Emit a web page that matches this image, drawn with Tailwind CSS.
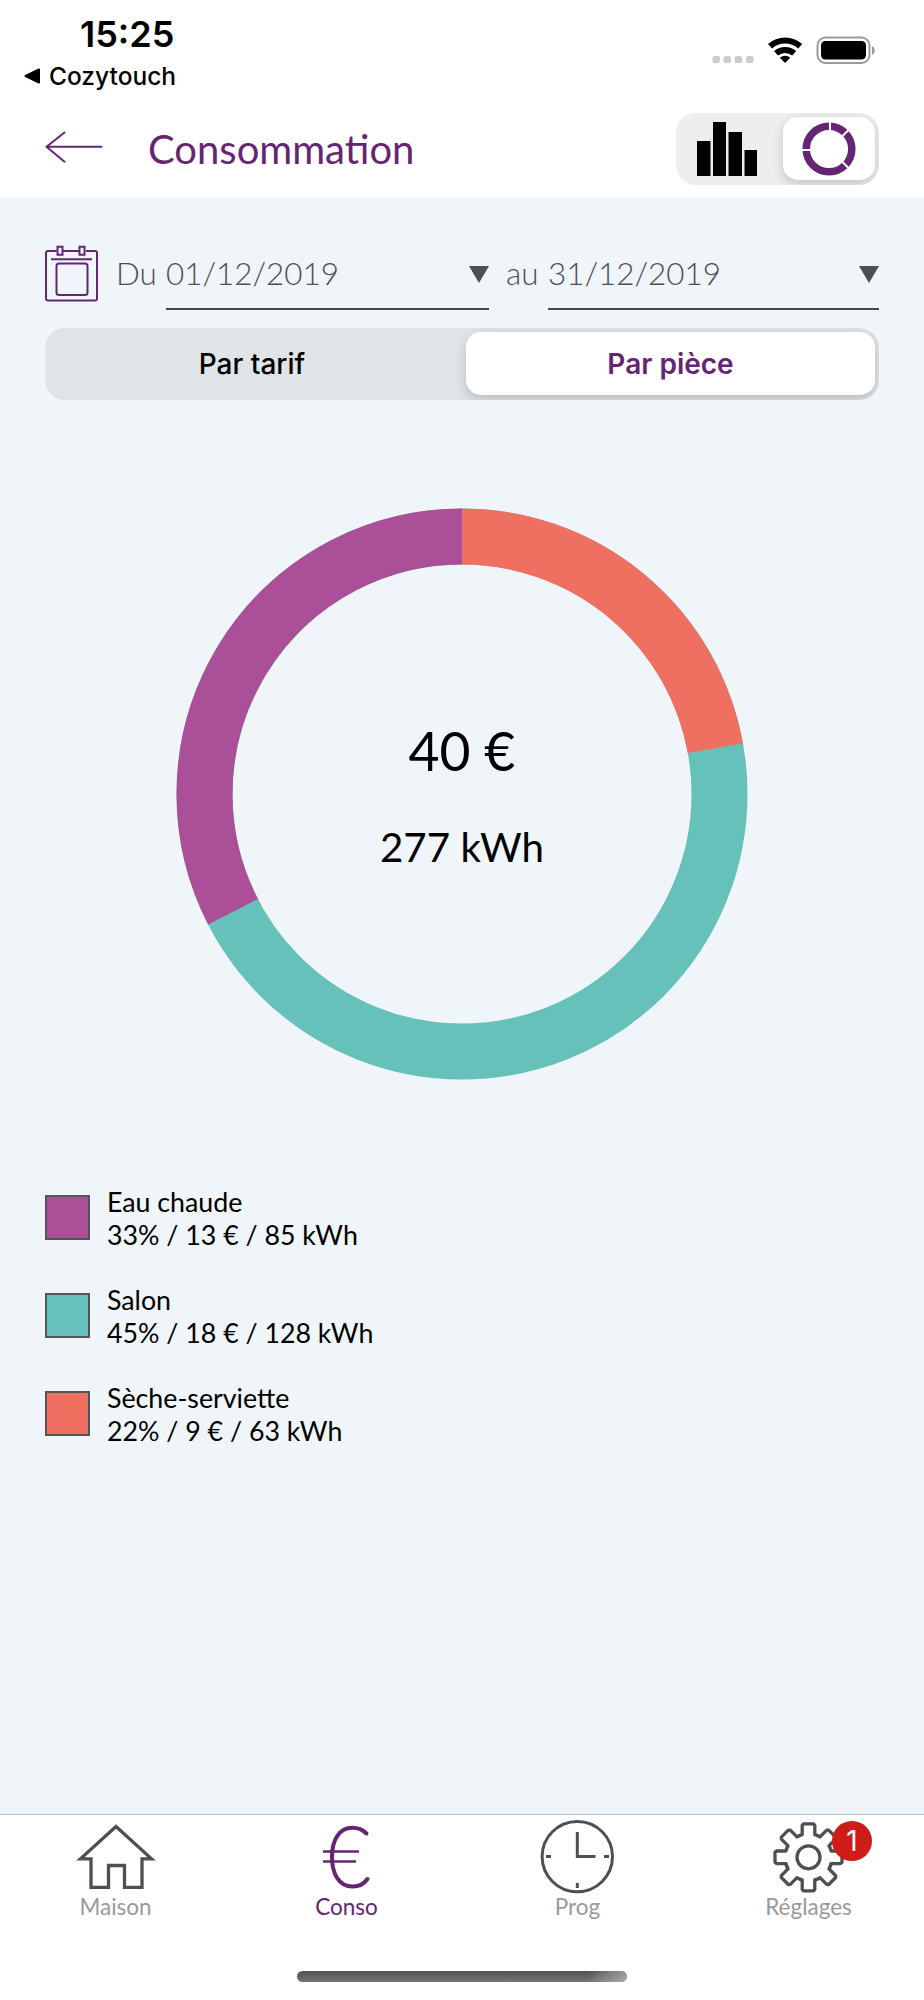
<!DOCTYPE html>
<html lang="fr">
<head>
    <meta charset="UTF-8">
    <meta name="viewport" content="width=device-width, initial-scale=1.0">
    <title>Consommation</title>
    <script src="https://cdn.jsdelivr.net/npm/@tailwindcss/browser@4"></script>
</head>
<body class="bg-white">
    <div class="w-[924px] h-[2000px] flex flex-col overflow-hidden font-['Lato',sans-serif] text-black">
        <!-- Status bar -->
        <div class="h-[100px] shrink-0 flex justify-between font-['Inter',sans-serif]">
            <div class="pl-6">
                <div class="pl-14 pt-[13px] h-[58px] text-[36px] leading-[43px] font-semibold">15:25</div>
                <div class="flex items-center h-[36px] gap-[9px]">
                    <svg class="w-4 h-4" viewBox="0 0 16 16"><path d="M1.5 8 15 1.5v13z" stroke="#000" stroke-width="2" stroke-linejoin="round"/></svg>
                    <span class="text-[24.5px] font-medium">Cozytouch</span>
                </div>
            </div>
            <svg class="w-[170px] h-[40px] mt-[30px] mr-[46px]" viewBox="0 0 170 40">
                <g fill="#ccc">
                    <rect x="4.500" y="26" width="7.500" height="7" rx="2"/>
                    <rect x="15.500" y="26" width="7.500" height="7" rx="2"/>
                    <rect x="26.700" y="26" width="7.500" height="7" rx="2"/>
                    <rect x="38" y="26" width="7.500" height="7" rx="2"/>
                </g>
                <g fill="none" stroke="#000" stroke-width="6">
                    <path d="M62 16.200a22.500 22.500 0 0 1 30.200 0"/>
                    <path d="M68 23.300a14 14 0 0 1 18.200 0"/>
                </g>
                <path d="M77.100 33l-5.200-5.300a8 8 0 0 1 10.400 0z"/>
                <rect x="109.500" y="7.500" width="52" height="25.500" rx="8" fill="none" stroke="#999" stroke-width="2"/>
                <rect x="113" y="11" width="45" height="18.500" rx="4.500"/>
                <path d="M164 16v9a5 5 0 0 0 0-9z" fill="#999"/>
            </svg>
        </div>

        <!-- Header -->
        <header class="h-[97px] shrink-0 flex px-[45px]">
            <svg class="w-[58px] h-[32px] mt-[31px]" viewBox="0 0 58 32" fill="none" stroke="#652573" stroke-width="2" stroke-linecap="round" stroke-linejoin="round"><path d="M56.500 15.700H1.500M19.500 1.500l-18 14.200 18 15"/></svg>
            <h1 class="ml-[45px] mt-[25px] text-[40px] leading-[48px] text-[#652573]">Consommation</h1>
            <div class="ml-auto mt-[13px] w-[203px] h-[72px] rounded-[20px] bg-[#eee] flex overflow-hidden p-1">
                <div class="w-[103px] pl-4 pt-[5px]">
                    <svg class="w-[62px] h-[54px]" viewBox="0 0 62 54"><path d="M1 19h13.500v35H1zM17 0h13v54H17zM32.500 10H46v44H32.500zM48.500 28H61v26H48.500z"/></svg>
                </div>
                <div class="w-[92px] h-[63px] rounded-[15px] bg-white shadow-[0_4px_12px_rgba(0,0,0,0.18)] flex items-center justify-center">
                    <svg class="w-[54px] h-[54px]" viewBox="0 0 54 54" fill="none">
                        <circle cx="27" cy="27" r="22.800" stroke="#652573" stroke-width="7.500"/>
                        <path d="M28 0v10M0 28h10M40.500 14l6-6M40.500 40l6 6" stroke="#fff" stroke-width="2"/>
                    </svg>
                </div>
            </div>
        </header>

        <main class="grow px-[45px] bg-[#eff5f9]">
            <!-- Date range -->
            <div class="flex h-[114px] pt-[47px] text-[31.4px] leading-[40px] font-light text-[#4c4f54]">
                <svg class="w-[54px] h-[58px]" viewBox="0 0 54 58" fill="none" stroke="#652573" stroke-width="2">
                    <path d="M11.500 7H3a2 2 0 0 0-2 2V54.500a2 2 0 0 0 2 2h47a2 2 0 0 0 2-2V9a2 2 0 0 0-2-2h-9M18 7h16M6 15.200h41"/>
                    <path d="M12.500 2.700h5v8h-5zM34.500 2.700h5v8h-5z"/>
                    <rect x="11.500" y="19.500" width="31" height="31.500" rx="2.500"/>
                </svg>
                <span class="w-[67px] pl-[17px] pt-[9px]">Du</span>
                <div class="w-[323px] h-[66px] border-b-2 border-[#46484d] flex justify-between pt-[9px]">
                    <span>01/12/2019</span>
                    <svg class="w-5 h-[17px] mt-[13px]" viewBox="0 0 20 17"><path d="M0 0h20L10 17z" fill="#4c4f54"/></svg>
                </div>
                <span class="w-[59px] pl-[17px] pt-[9px]">au</span>
                <div class="w-[331px] h-[66px] border-b-2 border-[#46484d] flex justify-between pt-[9px]">
                    <span>31/12/2019</span>
                    <svg class="w-5 h-[17px] mt-[13px]" viewBox="0 0 20 17"><path d="M0 0h20L10 17z" fill="#4c4f54"/></svg>
                </div>
            </div>

            <!-- Tabs -->
            <div class="mt-[17px] h-[72px] p-1 rounded-[20px] bg-[#dfe4e8] flex overflow-hidden font-['Inter',sans-serif] text-[28px] leading-[65px] text-center">
                <div class="w-[417px] pr-[11px] font-medium">Par tarif</div>
                <div class="w-[409px] h-[63px] rounded-[15px] bg-white shadow-[0_4px_12px_rgba(0,0,0,0.18)] font-semibold text-[#652573]">Par pièce</div>
            </div>

            <!-- Donut chart -->
            <div class="relative mt-[108px] mx-auto w-[572px] h-[572px]">
                <svg class="w-full h-full" viewBox="0 0 572 572" fill="none" stroke-width="56">
                    <circle cx="286" cy="286" r="257.500" stroke="#66c1ba"/>
                    <path d="M286 28.500A257.500 257.500 0 0 1 539.400 240.300" stroke="#ef6f61"/>
                    <path d="M286 28.500A257.500 257.500 0 0 0 57 403.700" stroke="#ac4f99"/>
                </svg>
                <div class="absolute inset-0 text-center">
                    <div class="mt-[209px] text-[53.5px] leading-[66px]">40 €</div>
                    <div class="mt-[39px] text-[40.3px] leading-[50px]">277 kWh</div>
                </div>
            </div>

            <!-- Legend -->
            <ul class="mt-[106px] text-[26.75px] leading-[33px]">
                <li class="flex h-[98px] gap-[17px]">
                    <span class="w-[45px] h-[45px] mt-[9px] border-2 border-[#555] bg-[#ac4f99]"></span>
                    <div>Eau chaude<br>33% / 13 € / 85 kWh</div>
                </li>
                <li class="flex h-[98px] gap-[17px]">
                    <span class="w-[45px] h-[45px] mt-[9px] border-2 border-[#555] bg-[#66c1ba]"></span>
                    <div>Salon<br>45% / 18 € / 128 kWh</div>
                </li>
                <li class="flex h-[98px] gap-[17px]">
                    <span class="w-[45px] h-[45px] mt-[9px] border-2 border-[#555] bg-[#ef6f61]"></span>
                    <div>Sèche-serviette<br>22% / 9 € / 63 kWh</div>
                </li>
            </ul>
        </main>

        <!-- Tab bar -->
        <nav class="h-[186px] shrink-0 border-t border-[#b9bcc0] bg-white">
            <div class="grid grid-cols-4 h-[156px] text-[22.5px] leading-[28px] text-center text-[#999]">
                <div class="flex flex-col items-center">
                    <svg class="w-[80px] h-[78px] overflow-visible" viewBox="0 1 80 78" fill="none" stroke="#4c4f54" stroke-width="3.300"><path d="M40 12.500 4.500 44.800H15V73.300H32.500V51.500H48.500V73.300H66V44.800H75.500z"/></svg>
                    <span>Maison</span>
                </div>
                <div class="flex flex-col items-center text-[#652573]">
                    <svg class="w-[80px] h-[78px] overflow-visible" viewBox="0 1 80 78" fill="none" stroke="#652573"><path d="M59.500 19.500C55 15 50 13.800 45.500 13.800C32 13.800 25 26 25 43S32 72.500 45.500 72.500C51 72.500 57 70 60.500 65" stroke-width="4" stroke-linecap="round"/><path d="M16 37.500h36M16 47.500h33" stroke-width="2.700"/></svg>
                    <span>Conso</span>
                </div>
                <div class="flex flex-col items-center">
                    <svg class="w-[80px] h-[78px] overflow-visible" viewBox="0 0 80 78" fill="none" stroke="#4c4f54" stroke-width="3"><circle cx="39.300" cy="41.600" r="35.200"/><path d="M39.300 17v24.500H57.500M8 41.500h5M66 41.500h5M39.300 68v5"/></svg>
                    <span>Prog</span>
                </div>
                <div class="relative flex flex-col items-center">
                    <svg class="w-[80px] h-[78px] overflow-visible" viewBox="-39.500 -42.300 80 78" fill="none" stroke="#4c4f54" stroke-width="3.300" stroke-linejoin="round">
                        <circle r="11.500"/>
                        <path id="gear" d=""/>
                    </svg>
                    <span>Réglages</span>
                    <span class="absolute left-[139px] top-[6px] w-[40px] h-[40px] rounded-full bg-[#ce1c18] text-white text-[28px] leading-[40px] font-['Inter',sans-serif]">1</span>
                </div>
            </div>
            <!-- Home indicator -->
            <div class="ml-[297px] w-[330px] h-[11px] rounded-full overflow-hidden bg-linear-to-b from-[#505050] to-[#757575]">
                <div class="ml-auto w-10 h-full bg-linear-to-r from-transparent to-white/40"></div>
            </div>
        </nav>
    </div>

    <script>
        // Eight-tooth gear outline around the origin
        const tooth = [[-11, -21], [-6.3, -22.5], [-6.3, -32], [-5, -33.5], [5, -33.5], [6.3, -32], [6.3, -22.5], [11, -21]];
        const points = [];
        for (let i = 0; i < 8; i++) {
            const a = i * Math.PI / 4;
            tooth.forEach(([x, y]) => {
                points.push((x * Math.cos(a) - y * Math.sin(a)).toFixed(1) + ' ' + (x * Math.sin(a) + y * Math.cos(a)).toFixed(1));
            });
        }
        document.getElementById('gear').setAttribute('d', 'M' + points.join('L') + 'z');
    </script>
</body>
</html>
